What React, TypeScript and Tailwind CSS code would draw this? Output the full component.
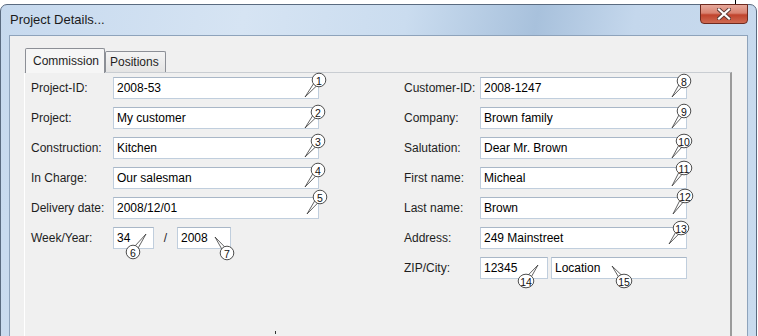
import React from 'react';

const leftRows: [string, string][] = [
  ['Project-ID:', '2008-53'],
  ['Project:', 'My customer'],
  ['Construction:', 'Kitchen'],
  ['In Charge:', 'Our salesman'],
  ['Delivery date:', '2008/12/01'],
];

const rightRows: [string, string][] = [
  ['Customer-ID:', '2008-1247'],
  ['Company:', 'Brown family'],
  ['Salutation:', 'Dear Mr. Brown'],
  ['First name:', 'Micheal'],
  ['Last name:', 'Brown'],
  ['Address:', '249 Mainstreet'],
];

// callout number, circle centre, tail tip (page coordinates)
const callouts: [number, number, number, number, number][] = [
  [1, 319, 80, 305, 97],
  [2, 318, 112, 305, 128],
  [3, 318, 141, 305, 157],
  [4, 318, 170, 305, 187],
  [5, 320, 197, 307, 214],
  [6, 133, 252, 146, 234],
  [7, 227, 253, 215, 237],
  [8, 684, 81, 672, 97],
  [9, 684, 111, 672, 128],
  [10, 684, 141, 672, 158],
  [11, 684, 168, 672, 186],
  [12, 685, 196, 673, 214],
  [13, 681, 228, 669, 244],
  [14, 526, 281, 538, 265],
  [15, 624, 281, 612, 266],
];

const Field = ({ value, className }: { value: string; className: string }) => (
  <div
    className={`h-[22px] bg-white border border-[#c0cedd] border-t-[#a9b7c7] flex items-center pl-[3px] text-[12px] text-black ${className}`}
  >
    {value}
  </div>
);

const Row = ({ label, value, labelW, fieldW }: { label: string; value: string; labelW: string; fieldW: string }) => (
  <div className="flex items-center">
    <span className={`${labelW} text-[12px] text-[#1e1e1e]`}>{label}</span>
    <Field value={value} className={fieldW} />
  </div>
);

const Callouts = () => (
  <svg className="absolute inset-0 pointer-events-none" width={758} height={336}>
    {callouts.map(([n, cx, cy, tx, ty]) => {
      const dx = tx - cx;
      const dy = ty - cy;
      const len = Math.hypot(dx, dy);
      const px = (-dy / len) * 2.6;
      const py = (dx / len) * 2.6;
      const rx = n > 9 ? 7.8 : 6.8;
      return (
        <g key={n}>
          <polygon
            points={`${cx + px},${cy + py} ${tx},${ty} ${cx - px},${cy - py}`}
            fill="#fff"
            stroke="#3a3a3a"
            strokeWidth={0.8}
          />
          <ellipse cx={cx} cy={cy} rx={rx} ry={6.8} fill="#fff" stroke="#3a3a3a" strokeWidth={0.9} />
          <text
            x={cx}
            y={cy + 0.5}
            fontSize={10.5}
            fontFamily="'Liberation Sans', Arial, sans-serif"
            textAnchor="middle"
            dominantBaseline="central"
            fill="#111"
          >
            {n}
          </text>
        </g>
      );
    })}
  </svg>
);

export default function App() {
  return (
    <div className="relative w-[758px] h-[336px] bg-white overflow-hidden font-['Liberation_Sans',Arial,sans-serif]">
      <div className="mt-[4px] w-[757px] h-[345px] rounded-t-[7px] border border-[#5a6b80] bg-[linear-gradient(100deg,#c6d9ee_0%,#d6e4f3_30%,#cadcef_50%,#a8c1dc_66%,#c4d7ec_78%,#c9dbee_100%)] flex flex-col">
        {/* title bar */}
        <div className="h-[30px] shrink-0 flex justify-between pl-[9px] pr-[8px]">
          <span className="self-center text-[13px] text-[#1b1b1b]">Project Details...</span>
          <div className="w-[48px] h-[20px] -mt-px rounded-b-[4px] border border-[#6e2a1f] bg-[linear-gradient(180deg,#e7a99b_0%,#d98270_45%,#c0432c_55%,#cf6a52_100%)] flex items-center justify-center">
            <svg width="14" height="12" viewBox="0 0 14 12">
              <path d="M2 1.5 L12 10.5 M12 1.5 L2 10.5" stroke="#5a3a35" strokeWidth="4" strokeLinecap="square" />
              <path d="M2 1.5 L12 10.5 M12 1.5 L2 10.5" stroke="#ffffff" strokeWidth="2.2" strokeLinecap="square" />
            </svg>
          </div>
        </div>

        {/* client area */}
        <div className="flex-1 min-h-0 px-[8px]">
          <div className="h-full border border-[#8ea3bb] bg-[#f0f0f0] pt-[12px] overflow-hidden">
            {/* tabs */}
            <div className="flex items-end ml-[15px] h-[24px]">
              <div className="relative z-10 w-[80px] h-[25px] -mb-px rounded-t-[2px] border border-b-0 border-[#8c8f96] bg-[#f6f6f6] flex items-center pl-[7px] text-[12px] text-[#1e1e1e]">
                Commission
              </div>
              <div className="w-[61px] h-[21px] rounded-t-[2px] border border-b-0 border-[#8c8f96] bg-[linear-gradient(180deg,#f4f4f4,#e4e4e4)] flex items-center pl-[4px] text-[12px] text-[#1e1e1e]">
                Positions
              </div>
            </div>

            {/* tab panel */}
            <div className="ml-[14px] w-[708px] h-[280px] border-t border-t-[#c9cdd2] border-l border-l-white border-r-2 border-r-[#9b9b9b] pt-[4px] pl-[6px] flex">
              <div className="flex flex-col gap-[8px]">
                {leftRows.map(([l, v]) => (
                  <Row key={l} label={l} value={v} labelW="w-[82px]" fieldW="w-[206px]" />
                ))}
                <div className="flex items-center">
                  <span className="w-[82px] text-[12px] text-[#1e1e1e]">Week/Year:</span>
                  <Field value="34" className="w-[41px]" />
                  <span className="w-[23px] text-center text-[12px] text-[#1e1e1e]">/</span>
                  <Field value="2008" className="w-[54px]" />
                </div>
              </div>

              <div className="ml-[85px] flex flex-col gap-[8px]">
                {rightRows.map(([l, v]) => (
                  <Row key={l} label={l} value={v} labelW="w-[76px]" fieldW="w-[207px]" />
                ))}
                <div className="flex items-center">
                  <span className="w-[76px] text-[12px] text-[#1e1e1e]">ZIP/City:</span>
                  <Field value="12345" className="w-[68px]" />
                  <Field value="Location" className="w-[136px] ml-[3px]" />
                </div>
              </div>
            </div>
          </div>
        </div>
      </div>

      <Callouts />

      {/* stray marks in the capture */}
      <div className="absolute left-[735px] top-0 w-px h-[4px] bg-black" />
      <div className="absolute left-[275px] top-[331px] w-px h-[3px] bg-[#333]" />
    </div>
  );
}
